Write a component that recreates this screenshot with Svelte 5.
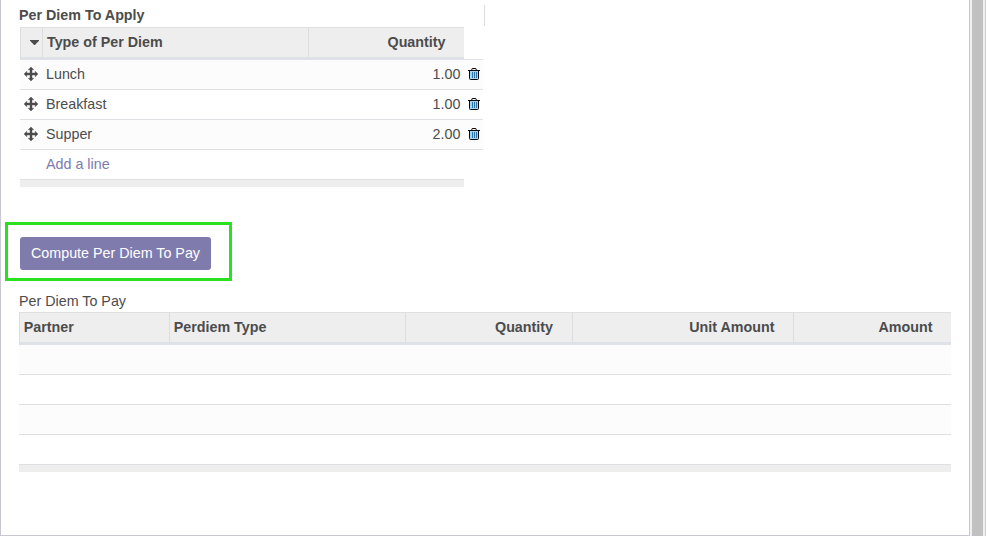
<script>
  const lines = [
    { name: 'Lunch', qty: '1.00' },
    { name: 'Breakfast', qty: '1.00' },
    { name: 'Supper', qty: '2.00' }
  ];
  const emptyRows = [1, 2, 3, 4];
</script>

<div class="screen">
  <main class="sheet">
    <div class="top">
      <div class="title strong">Per Diem To Apply</div>
      <div class="divider"></div>
    </div>

    <section class="apply">
      <div class="head">
        <div class="th sort">
          <svg width="9" height="5" viewBox="0 0 9 5"><path d="M0 0h9v.7L4.9 5h-.8L0 .7z" fill="#4c4c4c" /></svg>
        </div>
        <div class="th type">Type of Per Diem</div>
        <div class="th num qty">Quantity</div>
      </div>
      {#each lines as line}
        <div class="row">
          <span class="handle">
            <svg width="14" height="14" viewBox="0 0 14 14" fill="#4c4c4c">
              <path d="M7 0l2.8 2.8H8V6h3.2V4.2L14 7l-2.8 2.8V8H8v3.2h1.8L7 14l-2.8-2.8H6V8H2.8v1.8L0 7l2.8-2.8V6H6V2.8H4.2z" stroke="#4c4c4c" stroke-width=".4" stroke-linejoin="round" />
            </svg>
          </span>
          <span class="name">{line.name}</span>
          <span class="value">{line.qty}</span>
          <span class="trash">
            <svg width="12" height="12" viewBox="0 0 12 12">
              <path d="M2 3h8v8H2z" fill="#9fd3f8" />
              <path d="M4.5 4v6M6.5 4v6M8.5 4v6" stroke="#2f74a8" fill="none" />
              <path d="M0 2.5h12M3.5 2.5l.7-2h3.6l.7 2M1.5 3v7.5q0 1 1 1h7q1 0 1-1V3" stroke="#050505" fill="none" />
            </svg>
          </span>
        </div>
      {/each}
      <div class="row add"><a>Add a line</a></div>
      <div class="foot"></div>
    </section>

    <div class="highlight"><button>Compute Per Diem To Pay</button></div>

    <div class="title pay-title">Per Diem To Pay</div>
    <section class="pay">
      <div class="head">
        <div class="th">Partner</div>
        <div class="th">Perdiem Type</div>
        <div class="th num pay-qty">Quantity</div>
        <div class="th num">Unit Amount</div>
        <div class="th num">Amount</div>
      </div>
      {#each emptyRows as _}
        <div class="row"></div>
      {/each}
      <div class="foot"></div>
    </section>
  </main>
  <div class="scroll"><div class="thumb"></div></div>
</div>

<style>
  :global(body) { background: #fff; overflow: hidden; }
  .screen {
    display: flex; width: 986px; height: 536px; overflow: hidden;
    font: 14.3px/20px "Liberation Sans", Arial, sans-serif; color: #4c4c4c;
  }
  .screen, .screen * { box-sizing: border-box; }
  svg { display: block; }
  .sheet {
    width: 970px; height: 536px; padding-left: 18px;
    border: 1px solid #c8c8d3; border-top: 0;
  }
  .top { display: flex; height: 27px; padding-top: 5px; }
  .title { height: 20px; }
  .strong { font-weight: bold; width: 465px; }
  .divider { width: 1px; height: 21px; background: #ddd; }
  .apply { width: 464px; height: 160px; margin-left: 1px; }
  .head {
    display: flex; height: 33px; background: #eee;
    border-top: 1px solid #dfdfdf; border-bottom: 3px solid #dee1e6;
    font-weight: bold;
  }
  .apply .head { width: 444px; height: 32px; border-bottom-width: 2px; }
  .th { border-left: 1px solid #dcdde0; padding: 4px 18.5px 0 4px; white-space: nowrap; }
  .pay .th { padding-left: 3.7px; }
  .num { text-align: right; }
  .pay .pay-qty { padding-right: 19px; }
  .sort { width: 22px; padding: 12px 0 0 9px; }
  .type { width: 266px; }
  .qty { flex: 1; }
  .row { display: flex; height: 30px; border-bottom: 1px solid #dfe0e3; }
  .row:nth-child(even) { background: #fcfcfc; }
  .apply .row { width: 463px; padding-top: 4px; }
  .apply .row:nth-child(2) { height: 31px; border-top: 1px solid #dee1e6; }
  .handle { width: 26px; padding: 3px 0 0 4px; }
  .name { flex: 1; }
  .value { width: 60px; text-align: right; }
  .trash { width: 22.6px; padding: 4px 0 0 7.6px; }
  .apply .add { width: 444px; padding-left: 26px; background: #fff; }
  .add a { color: #7c7bad; }
  .foot { height: 7px; background: #eee; }
  .apply .foot { width: 444px; }
  .highlight {
    width: 227px; height: 59px; margin: 35px 0 0 -14px; padding: 12px;
    border: 3px solid #2be01e;
  }
  button {
    display: block; width: 191px; height: 33px; padding: 0 0 2px;
    border: 0; border-radius: 3px; background: #7f7bad; color: #fff; font: inherit;
    white-space: nowrap;
  }
  .pay-title { margin-top: 10px; height: 21px; }
  .pay { width: 932px; }
  .pay .head { display: grid; grid-template-columns: 150px 236px 167px 221px 158px; }
  .scroll { width: 16px; padding: 0 2px; background: #f0f0f0; border-right: 1px solid #ccc; }
  .thumb { width: 11px; height: 100%; background: #c1c1c1; }
</style>
